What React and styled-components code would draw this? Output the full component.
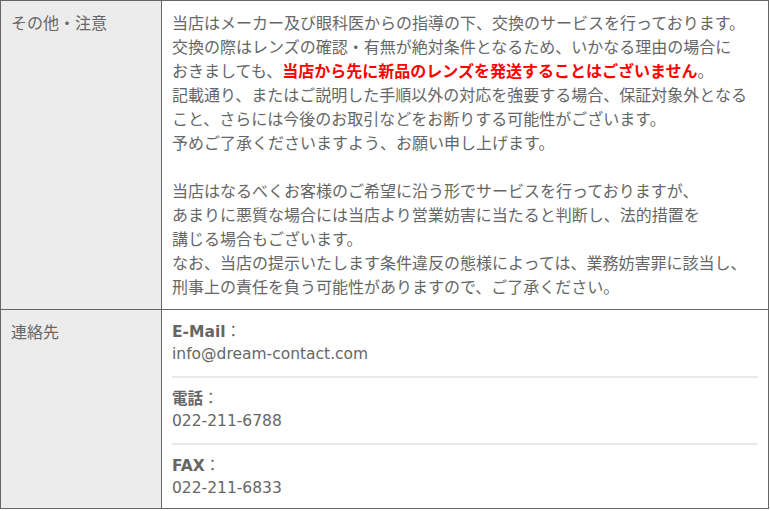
import React from "react";
import styled, { createGlobalStyle } from "styled-components";

const Global = createGlobalStyle`
  html, body { margin: 0; padding: 0; background: #fff; }
  body {
    font-family: "Open Sans", "Noto Sans CJK JP", sans-serif;
    color: #666;
  }
`;

const Table = styled.table`
  width: 769px;
  border-collapse: collapse;
  border: 1px solid #666;
  font-size: 16px;
  line-height: 24px;
`;

const Label = styled.th`
  width: 140px;
  padding: 10px 10px;
  background: #ececec;
  border: 1px solid #666;
  text-align: left;
  vertical-align: top;
  font-weight: normal;
  color: #666;
`;

const Cell = styled.td`
  padding: ${(p) => (p.$contact ? "11px 10px 9px" : "10px 10px")};
  border: 1px solid #666;
  vertical-align: top;
  color: #666;
`;

const Alert = styled.strong`
  color: #ff0000;
  font-weight: bold;
`;

const Para = styled.p`
  margin: 0;
  & + & { margin-top: 24px; }
`;

const ContactList = styled.dl`
  margin: 0;
  line-height: 22.4px;
  font-family: "DejaVu Sans", "Noto Sans CJK JP", sans-serif;
  font-size: 15.5px;
`;

const ContactItem = styled.div`
  padding: 10px 0;
  border-bottom: 2px solid #e9e9e9;
  &:first-child { padding-top: 0; }
  &:last-child { padding-bottom: 0; border-bottom: none; }
`;

const Term = styled.dt`
  margin: 0;
  b { font-weight: bold; }
`;

const Desc = styled.dd`
  margin: 0;
`;

const contacts = [
  { term: "E-Mail", value: "info@dream-contact.com" },
  { term: "電話", value: "022-211-6788" },
  { term: "FAX", value: "022-211-6833" },
];

export default function App() {
  return (
    <>
      <Global />
      <Table>
        <tbody>
          <tr>
            <Label>その他・注意</Label>
            <Cell>
              <Para>
                当店はメーカー及び眼科医からの指導の下、交換のサービスを行っております。<br />
                交換の際はレンズの確認・有無が絶対条件となるため、いかなる理由の場合に<br />
                おきましても、<Alert>当店から先に新品のレンズを発送することはございません</Alert>。<br />
                記載通り、またはご説明した手順以外の対応を強要する場合、保証対象外となる<br />
                こと、さらには今後のお取引などをお断りする可能性がございます。<br />
                予めご了承くださいますよう、お願い申し上げます。
              </Para>
              <Para>
                当店はなるべくお客様のご希望に沿う形でサービスを行っておりますが、<br />
                あまりに悪質な場合には当店より営業妨害に当たると判断し、法的措置を<br />
                講じる場合もございます。<br />
                なお、当店の提示いたします条件違反の態様によっては、業務妨害罪に該当し、<br />
                刑事上の責任を負う可能性がありますので、ご了承ください。
              </Para>
            </Cell>
          </tr>
          <tr>
            <Label>連絡先</Label>
            <Cell $contact>
              <ContactList>
                {contacts.map((c) => (
                  <ContactItem key={c.term}>
                    <Term><b>{c.term}</b>：</Term>
                    <Desc>{c.value}</Desc>
                  </ContactItem>
                ))}
              </ContactList>
            </Cell>
          </tr>
        </tbody>
      </Table>
    </>
  );
}
